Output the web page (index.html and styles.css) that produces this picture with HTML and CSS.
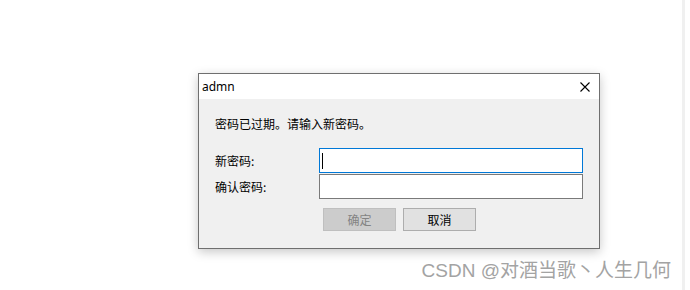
FILE: index.html
```html
<!DOCTYPE html>
<html lang="zh-CN">
<head>
<meta charset="utf-8">
<title>admn</title>
<link rel="stylesheet" href="styles.css">
</head>
<body>
<div class="page">
  <div class="stage">
    <div class="dialog">
      <div class="titlebar">
        <span class="title">admn</span>
        <svg class="close" width="10" height="10" viewBox="0 0 10 10"><path d="M0.5 0.5 L9.5 9.5 M9.5 0.5 L0.5 9.5" stroke="#000" stroke-width="1.1" fill="none"/></svg>
      </div>
      <div class="body">
        <div class="message">密码已过期。请输入新密码。</div>
        <div class="form">
          <label class="label">新密码:</label>
          <div class="input focused"><span class="caret"></span></div>
          <label class="label">确认密码:</label>
          <div class="input"></div>
        </div>
        <div class="buttons">
          <div class="btn disabled">确定</div>
          <div class="btn">取消</div>
        </div>
      </div>
    </div>
    <div class="watermark">CSDN @对酒当歌丶人生几何</div>
  </div>
  <div class="edge"></div>
</div>
</body>
</html>
```

FILE: styles.css
```css
html, body {
  margin: 0;
  padding: 0;
  background: #ffffff;
}
.page {
  display: flex;
  width: 690px;
  height: 290px;
  overflow: hidden;
}
.stage {
  flex: 1;
  display: flex;
  flex-direction: column;
  padding: 73px 0 0 198px;
}
.edge {
  width: 3px;
  background: #f0f0f0;
  margin-right: 5px;
}
.dialog {
  width: 402px;
  height: 176px;
  box-sizing: border-box;
  border: 1px solid #6f6f6f;
  background: #f0f0f0;
  box-shadow: 0 3px 10px rgba(0, 0, 0, 0.22);
  display: flex;
  flex-direction: column;
  font-family: "Noto Sans", "Noto Sans CJK SC", sans-serif;
}
.titlebar {
  height: 25px;
  background: #ffffff;
  display: flex;
  align-items: center;
  justify-content: space-between;
  padding: 0 9px 0 3px;
}
.title {
  font-size: 12px;
  color: #000;
  line-height: 16px;
}
.close {
  display: block;
}
.body {
  flex: 1;
  padding: 17px 0 0 16px;
  font-family: "Noto Sans CJK SC", sans-serif;
  font-size: 12px;
  line-height: 16px;
  color: #000;
}
.message {
  height: 16px;
}
.form {
  margin-top: 16px;
  display: grid;
  grid-template-columns: 104px 264px;
  grid-template-rows: 25px 25px;
  row-gap: 1px;
  align-items: center;
}
.label {
  padding-top: 1px;
}
.input {
  height: 25px;
  box-sizing: border-box;
  border: 1px solid #7a7a7a;
  background: #ffffff;
  display: flex;
  align-items: center;
  padding-left: 2px;
}
.input.focused {
  border-color: #0078d7;
}
.caret {
  width: 1px;
  height: 16px;
  background: #000;
}
.buttons {
  margin: 9px 0 0 108px;
  display: flex;
  gap: 7px;
}
.btn {
  width: 73px;
  height: 23px;
  box-sizing: border-box;
  border: 1px solid #adadad;
  background: #e1e1e1;
  display: flex;
  align-items: center;
  justify-content: center;
  color: #000;
}
.btn.disabled {
  background: #cccccc;
  border-color: #bfbfbf;
  color: #838383;
}
.watermark {
  margin-top: auto;
  margin-bottom: 8px;
  align-self: flex-end;
  margin-right: 11px;
  font-family: "Liberation Sans", "Noto Sans CJK SC", sans-serif;
  font-size: 19px;
  line-height: 22px;
  color: #a3a3a3;
  text-shadow: 0 0 2px #ffffff, 0 0 3px #ffffff;
}
```
